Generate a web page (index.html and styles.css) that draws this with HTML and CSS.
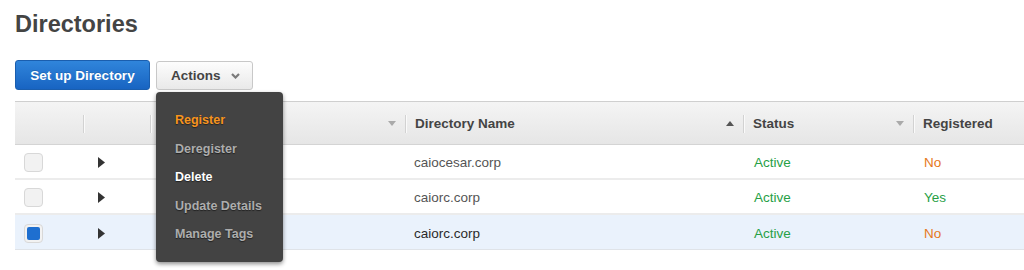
FILE: index.html
```html
<!DOCTYPE html>
<html>
<head>
<meta charset="utf-8">
<link rel="stylesheet" href="styles.css">
</head>
<body>
<h1 class="title">Directories</h1>
<div class="toolbar">
  <button class="btn btn-primary">Set up Directory</button>
  <div class="actions-wrap">
    <button class="btn btn-default">Actions
      <svg class="chev" width="9" height="6" viewBox="0 0 9 6"><path d="M1 1 L4.5 4.5 L8 1" fill="none" stroke="#7a7a7a" stroke-width="2.2"/></svg>
    </button>
    <ul class="menu">
      <li class="mi mi-hot">Register</li>
      <li class="mi mi-dis">Deregister</li>
      <li class="mi mi-on">Delete</li>
      <li class="mi mi-dis">Update Details</li>
      <li class="mi mi-dis">Manage Tags</li>
    </ul>
  </div>
</div>
<div class="table">
  <div class="row head">
    <div class="hc"></div>
    <div class="hc sep"></div>
    <div class="hc sep"><span class="grow"></span><svg class="caret" width="8" height="5" viewBox="0 0 8 5"><polygon points="0,0 8,0 4,5" fill="#aaa"/></svg></div>
    <div class="hc sep"><span class="grow">Directory Name</span><svg class="caret" width="8" height="5" viewBox="0 0 8 5"><polygon points="0,5 8,5 4,0" fill="#555"/></svg></div>
    <div class="hc sep"><span class="grow">Status</span><svg class="caret" width="8" height="5" viewBox="0 0 8 5"><polygon points="0,0 8,0 4,5" fill="#aaa"/></svg></div>
    <div class="hc sep"><span class="grow">Registered</span></div>
  </div>
  <div class="row body">
    <div class="c c-check"><span class="cb"></span></div>
    <div class="c c-exp"><svg width="7" height="11" viewBox="0 0 7 11"><polygon points="0,0 7,5.5 0,11" fill="#333"/></svg></div>
    <div class="c"></div>
    <div class="c c-name">caiocesar.corp</div>
    <div class="c c-status ok">Active</div>
    <div class="c c-reg no">No</div>
  </div>
  <div class="row body">
    <div class="c c-check"><span class="cb"></span></div>
    <div class="c c-exp"><svg width="7" height="11" viewBox="0 0 7 11"><polygon points="0,0 7,5.5 0,11" fill="#333"/></svg></div>
    <div class="c"></div>
    <div class="c c-name">caiorc.corp</div>
    <div class="c c-status ok">Active</div>
    <div class="c c-reg ok">Yes</div>
  </div>
  <div class="row body selected">
    <div class="c c-check"><span class="cb checked"></span></div>
    <div class="c c-exp"><svg width="7" height="11" viewBox="0 0 7 11"><polygon points="0,0 7,5.5 0,11" fill="#333"/></svg></div>
    <div class="c"></div>
    <div class="c c-name">caiorc.corp</div>
    <div class="c c-status ok">Active</div>
    <div class="c c-reg no">No</div>
  </div>
</div>
</body>
</html>
```
FILE: styles.css
```css
html, body {
  margin: 0;
  padding: 0;
  background: #fff;
  overflow: hidden;
}
body {
  width: 1024px;
  height: 270px;
  padding: 10px 0 0 15px;
  box-sizing: border-box;
  font-family: "Liberation Sans", Arial, sans-serif;
  color: #444;
}
.title {
  margin: 0;
  font-size: 23.5px;
  line-height: 28px;
  font-weight: bold;
  color: #444;
}
.toolbar {
  margin-top: 22px;
  display: flex;
  gap: 6px;
  align-items: flex-start;
}
.btn {
  font-family: "Liberation Sans", Arial, sans-serif;
  font-size: 13.5px;
  font-weight: bold;
  height: 30px;
  border-radius: 3px;
  box-sizing: border-box;
  display: flex;
  align-items: center;
  cursor: pointer;
}
.btn-primary {
  width: 135px;
  justify-content: center;
  color: #fff;
  background: linear-gradient(#3085db, #1864c2);
  border: 1px solid #1a5eae;
  text-shadow: 0 -1px 0 rgba(0,0,0,.15);
}
.btn-default {
  width: 97px;
  margin-top: 1px;
  height: 29px;
  padding: 0 0 0 14px;
  color: #444;
  background: linear-gradient(#fdfdfd, #e9e9e9);
  border: 1px solid #c8c8c8;
  gap: 10px;
}
.chev { display: block; margin-top: 1px; }
.actions-wrap { position: relative; }
.menu {
  position: absolute;
  top: 32px;
  left: 0;
  width: 127px;
  margin: 0;
  padding: 14px 0 13px;
  list-style: none;
  background: #434343;
  border-radius: 4px;
  box-shadow: 0 2px 4px rgba(0,0,0,.45);
  z-index: 5;
}
.mi {
  padding-left: 19px;
  font-size: 12.5px;
  font-weight: bold;
  line-height: 28.6px;
  white-space: nowrap;
  text-shadow: 0 1px 1px rgba(0,0,0,.5);
}
.mi-hot { color: #f7941d; }
.mi-dis { color: #adadad; }
.mi-on { color: #fff; }
.table {
  margin-top: 11px;
  width: 1009px;
  border-top: 1px solid #cfcfcf;
}
.row {
  display: grid;
  grid-template-columns: 68px 67px 255px 338px 170px 1fr;
}
.head {
  height: 43px;
  background: linear-gradient(#f4f4f4, #e6e6e6);
  border-bottom: 1px solid #d4d4d4;
  box-sizing: border-box;
}
.hc {
  display: flex;
  align-items: center;
  position: relative;
  padding: 0 9px 0 10px;
  font-size: 13.5px;
  font-weight: bold;
  color: #444;
}
.hc.sep::before {
  content: "";
  position: absolute;
  left: 0;
  top: 13px;
  height: 18px;
  width: 1px;
  background: #d2d2d2;
  box-shadow: 1px 0 0 #fafafa;
}
.grow { flex: 1; }
.caret { display: block; }
.body {
  height: 35px;
  border-bottom: 2px solid #ececec;
  box-sizing: border-box;
  font-size: 13.5px;
  color: #555;
}
.body .c { padding-top: 2px; }
.body.selected {
  background: #eaf2fc;
  border-bottom: 1px solid #dfe3e8;
  color: #2a2a2a;
}
.c {
  display: flex;
  align-items: center;
  padding-left: 11px;
}
.c-check { padding-left: 9px; }
.c-exp { padding-left: 15px; }
.c-name { padding-left: 9px; }
.c-status { padding-left: 11px; }
.c-reg { padding-left: 11px; }
.cb {
  width: 19px;
  height: 19px;
  box-sizing: border-box;
  border: 1px solid #d8d8d8;
  border-radius: 4px;
  background: #f2f2f2;
  display: flex;
  align-items: center;
  justify-content: center;
}
.cb.checked::after {
  content: "";
  width: 13px;
  height: 13px;
  border-radius: 2px;
  background: #1e6fd0;
}
.ok { color: #27a046; }
.no { color: #e67822; }
```
